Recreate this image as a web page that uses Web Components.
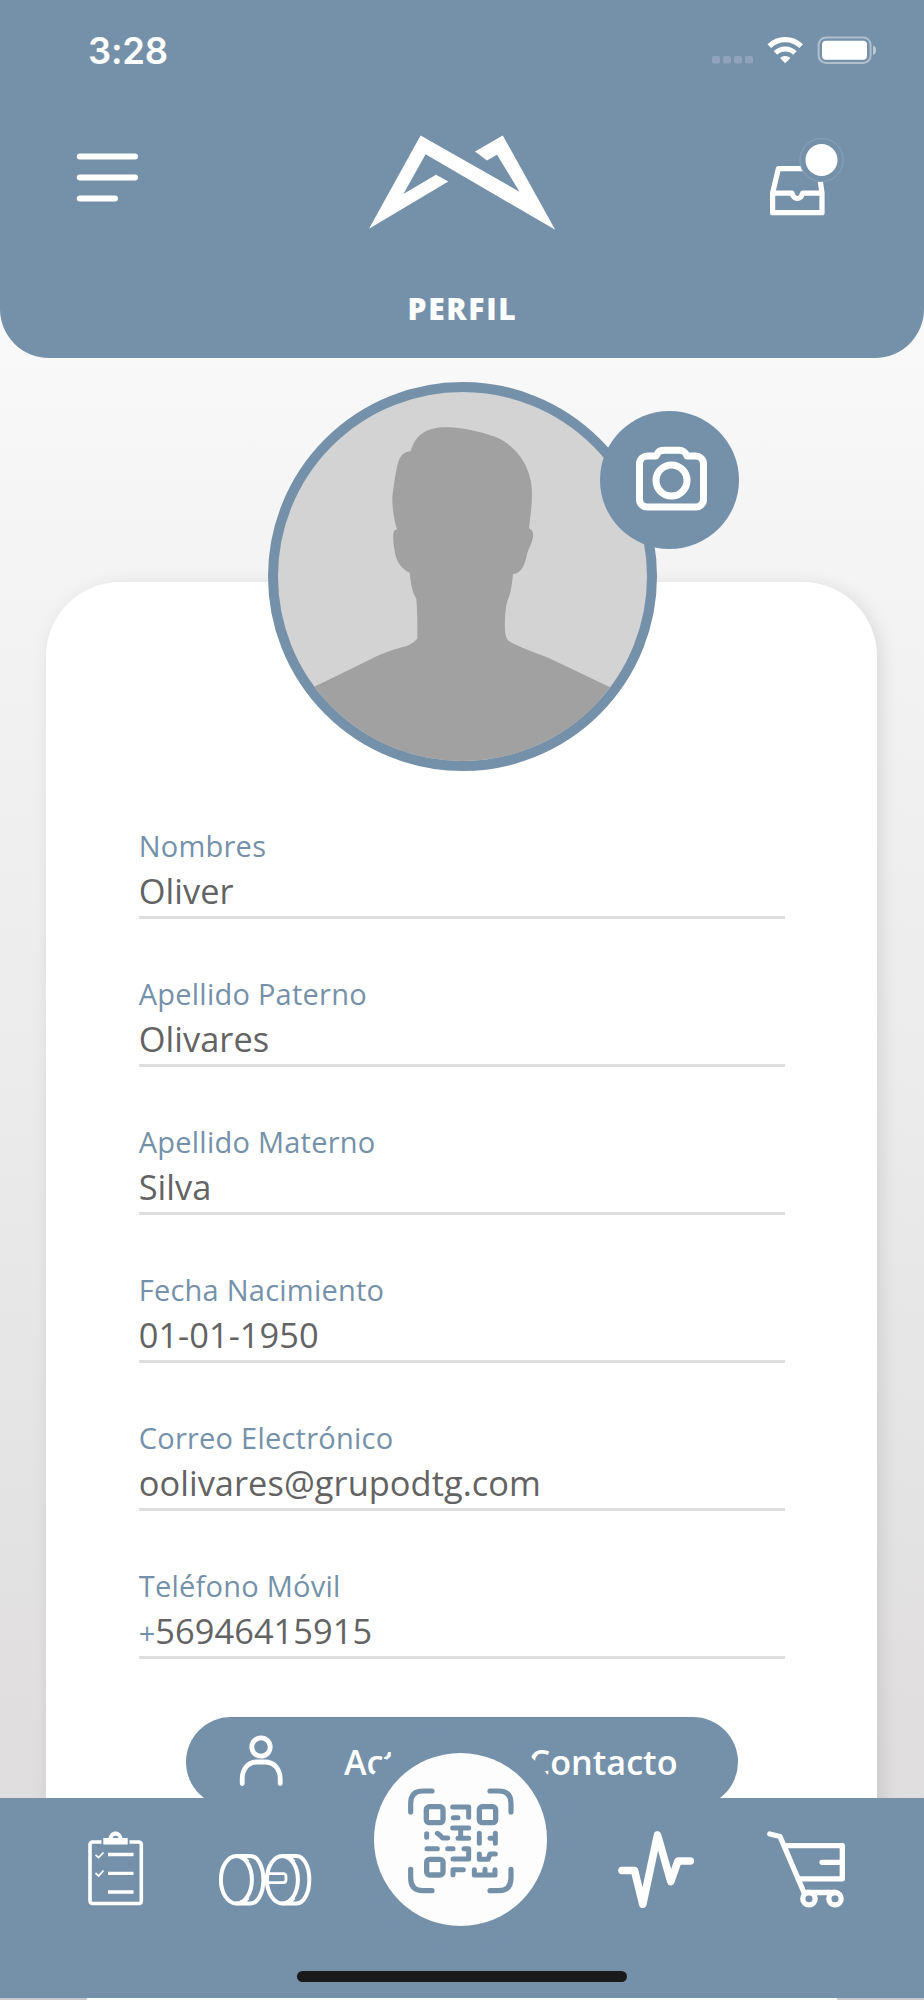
<!DOCTYPE html>
<html lang="es">
<head>
<meta charset="utf-8">
<title>Perfil</title>
<style>
html,body{margin:0;padding:0}
body{width:924px;height:2000px;overflow:hidden;font-family:"Open Sans","Noto Sans",sans-serif;--brand:#7591aa;--ink:#636363}
</style>
</head>
<body>
<profile-screen></profile-screen>
<script>
const define = (name, html) => {
  const t = document.createElement('template');
  t.innerHTML = html;
  customElements.define(name, class extends HTMLElement {
    constructor() {
      super();
      this.attachShadow({ mode: 'open' }).appendChild(t.content.cloneNode(true));
    }
  });
};

define('status-bar', `
<style>
:host{display:flex;justify-content:space-between;align-items:flex-start;height:102px;box-sizing:border-box;padding:0 48px 0 88px;color:#fff}
.time{font:570 36.400px/44px Inter,sans-serif;letter-spacing:-.2px;margin-top:29px}
svg{display:block;margin-top:34px}
</style>
<span class="time">3:28</span>
<svg width="166" height="32" viewBox="710 34 166 32">
  <g fill="#c0bfd8" fill-opacity=".38"><rect x="712" y="56" width="8" height="7.500" rx="2"/><rect x="723" y="56" width="8" height="7.500" rx="2"/><rect x="734" y="56" width="8" height="7.500" rx="2"/><rect x="745" y="56" width="8" height="7.500" rx="2"/></g>
  <g fill="none" stroke="#fff" stroke-width="5.200"><path d="M769.300 46.200a22.500 22.500 0 0 1 31.800 0"/><path d="M775.500 53a13.800 13.800 0 0 1 19.400 0"/></g>
  <path d="M785.200 63.300l-5.200-5.300a7.800 7.800 0 0 1 10.400 0z" fill="#fff"/>
  <rect x="818.600" y="37.400" width="52" height="25.600" rx="7.500" fill="none" stroke="#fff" stroke-opacity=".42" stroke-width="2"/>
  <rect x="822" y="40.800" width="45" height="19" rx="4" fill="#fff"/>
  <path d="M873 45.600c2 .6 3.200 2.500 3.200 4.700s-1.200 4.100-3.200 4.700z" fill="#fff" fill-opacity=".5"/>
</svg>`);

define('app-header', `
<style>
:host{display:block;height:358px;background:var(--brand);border-radius:0 0 49px 49px;color:#fff;position:relative;z-index:1}
.row{display:grid;grid-template-columns:200px 1fr 200px;height:170px;align-items:start}
svg{display:block}
.menu{margin:50px 0 0 76px}.logo{justify-self:center;margin-top:33px}.tray{margin:34px 0 0 42px}
h1{margin:0;text-align:center;font:800 30px/38px "Open Sans",sans-serif;letter-spacing:1.700px;padding:18px 0 0 1px}
</style>
<status-bar></status-bar>
<div class="row">
  <svg class="menu" width="64" height="50" viewBox="76 152 64 50" stroke="#fff" stroke-width="6" stroke-linecap="round"><path d="M79.800 156.600H135M79.800 177.400H135M79.800 198.400H115"/></svg>
  <svg class="logo" width="188" height="96" viewBox="368 135 188 96" fill="#fff"><path d="M420.600 135.500L519.500 191.700L497 154.700L487 160.500L475 151.500L502.800 135.500L555.200 229.800L425.600 154.300L403.400 194L436 174.700L448.300 181.500L369 228.700Z"/></svg>
  <svg class="tray" width="80" height="84" viewBox="766 136 80 84" fill="none" stroke="#fff" stroke-width="5.200" stroke-linejoin="round"><path d="M772.600 193.200L778.400 168.700H818.600L822 193.200V212.700H772.600ZM772.600 193.200H792C792.800 196.200 794 198.500 797.300 198.500S801.800 196.200 802.600 193.200H822"/><circle cx="821.500" cy="160" r="21.600" fill="#7591aa" stroke="#88a2b9" stroke-width="1"/><circle cx="821.500" cy="160" r="16" fill="#fff" stroke="none"/></svg>
</div>
<h1><slot></slot></h1>`);

define('profile-avatar', `
<style>
:host{display:block;width:389px;height:389px;position:relative}
.ring{width:389px;height:389px;box-sizing:border-box;border:10px solid var(--brand);border-radius:50%;overflow:hidden;background:#d3d3d3}
.ring svg{display:block;width:369px;height:369px}
.cam{position:absolute;left:332px;top:29px;width:139px;height:138px;border-radius:50%;background:var(--brand);display:grid;place-items:center}
.cam svg{transform:translate(1px,-2px)}
</style>
<div class="ring"><svg viewBox="114 96 1107 1107"><path fill="#a1a1a1" d="M512 274C526 225 558 202 620 202C670 202 742 220 776 235C830 262 876 320 876 400C876 440 870 475 867 505C876 508 881 516 879 532C876 550 868 562 862 578C856 606 850 638 819 642C816 672 813 700 803 720C795 745 794 780 795 812C797 832 802 840 811 846C840 862 890 880 925 893L1115 984L1230 1210H100L220 982L395 896C430 878 470 866 500 858C514 852 524 844 532 836C532 790 532 750 529 716C516 695 512 668 509 638C480 625 466 596 464 572C460 550 458 528 461 516C463 510 467 510 471 508C462 480 456 440 457 410C460 385 464 355 469 330C475 300 482 276 512 274Z"/></svg></div>
<div class="cam"><svg width="74" height="66" viewBox="634 445 74 66" fill="none" stroke="#fff" stroke-width="7" stroke-linejoin="round"><path d="M639.500 463.500A8 8 0 0 1 647.500 456H656C658.500 450.500 660.500 450.300 664.500 450.300H679C683 450.300 685 451.500 687 456H695.500A8 8 0 0 1 703.500 463.500V499.500A7.500 7.500 0 0 1 696 507H647A7.500 7.500 0 0 1 639.500 499.500Z"/><circle cx="671.500" cy="480.500" r="15.500"/></svg></div>`);

define('form-field', `
<style>
:host{display:block;height:148px}
.label{display:block;color:var(--brand);font-size:29px;line-height:34px;height:42px;letter-spacing:.24px;white-space:nowrap}
.value{display:block;box-sizing:border-box;height:48px;border-bottom:3px solid #dedede;color:var(--ink);font-size:34.400px;line-height:39px;white-space:nowrap;letter-spacing:.05px}
::slotted(b){font-weight:400;font-size:29px;color:var(--brand)}
</style>
<slot name="label" class="label"></slot><div class="value"><slot></slot></div>`);

define('contact-button', `
<style>
:host{display:flex;width:552px;height:90px;border-radius:45px;background:var(--brand);color:#fff;font-size:34.200px;font-weight:600;line-height:89px;white-space:nowrap}
svg{display:block;margin:16px 0 0 50px}
span{margin-left:58px;word-spacing:11px}
</style>
<svg width="50" height="58" viewBox="236 1733 50 58" fill="none" stroke="#fff" stroke-width="4.800" stroke-linecap="round"><circle cx="261" cy="1747" r="9.200"/><path d="M242.200 1783.500V1779C242.200 1769 248 1762 257 1762H265C274 1762 280.200 1769 280.200 1779V1783.500"/></svg>
<span><slot></slot></span>`);

define('profile-card', `
<style>
:host{display:block;width:831px;height:1300px;box-sizing:border-box;margin:-189px 0 0 46.400px;padding:247px 92px 0 92.300px;background:#fff;border-radius:74px;box-shadow:4px 3px 18px rgba(0,0,0,.1)}
contact-button{margin:0 0 0 47.300px}
</style>
<slot></slot>
<contact-button>Actualizar Contacto</contact-button>`);

define('nav-bar', `
<style>
:host{position:absolute;left:0;right:0;top:1798px;height:200px;background:var(--brand);z-index:3;display:grid;grid-template-columns:214px 159px 174px 181px 196px;align-items:start}
svg{display:block}
.list{margin:30px 0 0 86px}.bell{margin:52px 0 0 3px}.pulse{margin:28px 0 0 68px}.cart{margin:28px 0 0 36px}
.scan{width:173px;height:173px;border-radius:50%;background:#fdfdfd;margin:-45px 0 0 .7px;display:grid;place-items:center;box-shadow:0 0 0 22px var(--brand)}
.scan svg{transform:translate(1px,1px)}
.home{position:absolute;left:297px;top:173px;width:330px;height:11px;border-radius:6px;background:#1a1a1a}
</style>
<svg class="list" width="60" height="78" viewBox="86 1828 60 78" fill="none" stroke="#fff" stroke-width="3.600"><path d="M101.500 1842H92.500A2.500 2.500 0 0 0 90 1844.500V1901A2.500 2.500 0 0 0 92.500 1903.500H139A2.500 2.500 0 0 0 141.300 1901V1844.500A2.500 2.500 0 0 0 139 1842H129.500"/><path d="M103.300 1838H108.500C109.500 1834 112 1831.500 115.500 1831.500S121.500 1834 122.500 1838H127.700V1844.500H103.300Z" fill="#fff" stroke="none"/><path d="M112.500 1838A3.200 3 0 0 1 118.700 1838Z" fill="#7591aa" stroke="none"/><path d="M108 1854.500H133.500M108 1873.300H133.500M108 1892H133.500" stroke-width="3.300"/><path d="M95.500 1854.800L98.600 1857.600L103.500 1852.500M95.500 1873L98.600 1876L103.500 1870.500" stroke-width="1.800"/></svg>
<svg class="bell" width="96" height="56" viewBox="217 1850 96 56" fill="none" stroke="#fff" stroke-width="4"><ellipse cx="236.400" cy="1879.700" rx="15.500" ry="23.800"/><path d="M236.400 1855.900H250.500C257.500 1855.900 263.400 1866 263.400 1879.700S257.500 1903.500 250.500 1903.500H236.400M240 1857.200H247C243 1857.500 246 1860 248 1862M240 1902.200H247C243 1902 246 1899.500 248 1897.500"/><ellipse cx="282.400" cy="1879.700" rx="15.500" ry="23.800"/><path d="M282.400 1855.900H296.500C303.500 1855.900 309.300 1866 309.300 1879.700S303.500 1903.500 296.500 1903.500H282.400M286 1857.200H293C289 1857.500 292 1860 294 1862M286 1902.200H293C289 1902 292 1899.500 294 1897.500"/><path d="M268 1873.700H283A3 3 0 0 1 286 1876.500V1880A3 3 0 0 1 283 1882.700H268" stroke-width="2.800"/></svg>
<div class="scan"><svg width="106" height="106" viewBox="145 143 318 318" fill="none" stroke="#7591aa" stroke-width="15.500" stroke-linecap="round" stroke-linejoin="round">
<path d="M217 152H190Q153 152 153 189V215M391 152H417Q454 152 454 189V215M153 387V413Q153 451 190 451H217M454 387V413Q454 451 417 451H391"/>
<g stroke-width="15"><rect x="200" y="199" width="50" height="48" rx="9" stroke-width="16"/><rect x="359" y="199" width="49" height="48" rx="9" stroke-width="16"/><rect x="201" y="357" width="49" height="47" rx="9" stroke-width="16"/>
<path d="M279 200H327V231M281 232H295M279 263H327M303 263V294M295 294H327M201 280V291M233 279L241 285L249 293H264M202 325H233M264 325H280M313 325H327V356H280M359 279V309M391 294H407M407 279V309M359 341V357H385L391 341H407M280 403V388H311M344 388V404H406V388M376 387V403"/></g></svg></div>
<svg class="pulse" width="80" height="82" viewBox="615 1826 80 82" fill="none" stroke="#fff" stroke-width="7.600" stroke-linecap="round" stroke-linejoin="round"><path d="M622 1870.500H634.500L642.800 1904.300L657.500 1835L670.800 1881.500L678 1861H690.300"/></svg>
<svg class="cart" width="84" height="82" viewBox="764 1826 84 82" fill="none" stroke="#fff" stroke-width="5.300" stroke-linecap="round" stroke-linejoin="round"><path d="M769.800 1834L780 1836.500L804 1892.500M786.500 1845.700H842.300V1878.800H800M822 1862.300H842M804 1892.500H836"/><circle cx="809" cy="1898.700" r="6.200"/><circle cx="835" cy="1898.700" r="6.200"/></svg>
<div class="home"></div>`);

define('profile-screen', `
<style>
:host{display:block;position:relative;width:924px;height:2000px;overflow:hidden;background:linear-gradient(90deg,#c9c9cc 86px,#fff 88px 836px,#c9c9cc 838px) 0 1998px/100% 2px no-repeat,linear-gradient(#f9f9f9 340px,#f3f3f3 600px,#ebebeb 1100px,#dfdddd 1800px)}
profile-avatar{margin:24px 0 0 268px;z-index:2}
b{font-weight:400}
</style>
<app-header>PERFIL</app-header>
<profile-avatar></profile-avatar>
<profile-card>
  <form-field><span slot="label">Nombres</span>Oliver</form-field>
  <form-field><span slot="label">Apellido Paterno</span>Olivares</form-field>
  <form-field><span slot="label">Apellido Materno</span>Silva</form-field>
  <form-field><span slot="label">Fecha Nacimiento</span>01-01-1950</form-field>
  <form-field><span slot="label">Correo Electrónico</span>oolivares@grupodtg.com</form-field>
  <form-field><span slot="label">Teléfono Móvil</span><b>+</b>56946415915</form-field>
</profile-card>
<nav-bar></nav-bar>`);
</script>
</body>
</html>
